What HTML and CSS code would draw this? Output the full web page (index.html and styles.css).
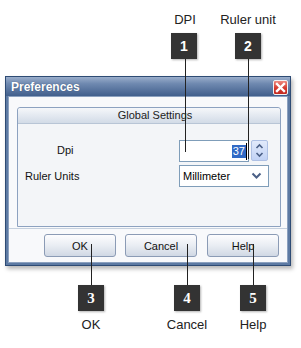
FILE: index.html
```html
<!DOCTYPE html>
<html>
<head>
<meta charset="utf-8">
<link rel="stylesheet" href="styles.css">
</head>
<body>
<div class="stage">
  <div class="dialog">
    <div class="titlebar">
      <span class="title">Preferences</span>
      <span class="close">
        <svg width="15" height="15" viewBox="0 0 15 15"><path d="M4 4 L11 11 M11 4 L4 11" stroke="#fff" stroke-width="2.4" stroke-linecap="square"/></svg>
      </span>
    </div>
    <div class="client">
      <div class="group">
        <div class="group-head">Global Settings</div>
        <div class="group-body">
          <div class="row">
            <span class="label label-dpi">Dpi</span>
            <div class="field">
              <div class="input"><span class="sel">37</span><span class="caret"></span></div>
              <div class="spin">
                <svg width="17" height="21" viewBox="0 0 17 21"><path d="M5.5 8 L8.5 5 L11.5 8" fill="none" stroke="#4a5f86" stroke-width="1.6"/><path d="M5.5 13 L8.5 16 L11.5 13" fill="none" stroke="#4a5f86" stroke-width="1.6"/></svg>
              </div>
            </div>
          </div>
          <div class="row">
            <span class="label">Ruler Units</span>
            <div class="select">
              <span>Millimeter</span>
              <svg width="11" height="8" viewBox="0 0 11 8"><path d="M1.5 1.5 L5.5 5.5 L9.5 1.5" fill="none" stroke="#4a5f86" stroke-width="2"/></svg>
            </div>
          </div>
        </div>
      </div>
      <div class="buttons">
        <div class="btn">OK</div>
        <div class="btn">Cancel</div>
        <div class="btn btn-help">Help</div>
      </div>
    </div>
  </div>

  <div class="note note-top" style="left:165px;width:40px;">DPI</div>
  <div class="note note-top" style="left:213px;width:70px;">Ruler unit</div>
  <div class="badge" style="left:171px;top:33px;">1</div>
  <div class="badge" style="left:235px;top:33px;">2</div>
  <div class="vline" style="left:185px;top:59px;height:93px;"></div>
  <div class="vline" style="left:248px;top:59px;height:100px;"></div>

  <div class="vline" style="left:91px;top:244px;height:41px;"></div>
  <div class="vline" style="left:187px;top:244px;height:41px;"></div>
  <div class="vline" style="left:253px;top:244px;height:41px;"></div>
  <div class="badge badge-serif" style="left:78px;top:285px;">3</div>
  <div class="badge badge-serif" style="left:174px;top:285px;">4</div>
  <div class="badge badge-serif" style="left:240px;top:285px;">5</div>
  <div class="note note-bottom" style="left:66px;width:50px;">OK</div>
  <div class="note note-bottom" style="left:157px;width:60px;">Cancel</div>
  <div class="note note-bottom" style="left:228px;width:50px;">Help</div>
</div>
</body>
</html>
```
FILE: styles.css
```css
html, body {
  margin: 0;
  padding: 0;
  background: #ffffff;
}
.stage {
  position: relative;
  width: 301px;
  height: 348px;
  overflow: hidden;
  font-family: "Liberation Sans", Arial, sans-serif;
}
.dialog {
  margin: 76px 0 0 5px;
  width: 284px;
  border: 1px solid #2e4b74;
  background: #5d7aa3;
  box-shadow: 2px 3px 4px rgba(0, 0, 0, 0.28);
}
.titlebar {
  height: 19px;
  display: flex;
  align-items: center;
  justify-content: space-between;
  padding: 0 2px 0 5px;
  background: linear-gradient(#9aaecb 0%, #6f89b0 35%, #415f8c 100%);
}
.title {
  color: #ffffff;
  font-weight: bold;
  font-size: 12px;
  text-shadow: 0 0 1px rgba(20, 40, 70, 0.6);
}
.close {
  width: 15px;
  height: 15px;
  box-sizing: border-box;
  border: 1px solid #f2f2f2;
  border-radius: 2px;
  background: linear-gradient(#ee8a80, #d43a2e 55%, #c42a20);
  display: flex;
  align-items: center;
  justify-content: center;
  margin-top: 1px;
}
.close svg { display: block; margin: -1px; }
.client {
  margin: 0 2px 2px 2px;
  border: 1px solid #8ca1bf;
  background: #f8f9fb;
}
.group {
  margin: 10px 6px 0 8px;
  border: 1px solid #8da2c0;
  border-radius: 3px 3px 0 0;
  background: #f3f5f8;
}
.group-head {
  height: 15px;
  line-height: 15px;
  text-align: center;
  font-size: 11px;
  color: #222;
  padding-left: 12px;
  background: linear-gradient(#f5f7fa, #d2dbe7);
  border-bottom: 1px solid #b8c5d6;
  border-radius: 3px 3px 0 0;
}
.group-body {
  height: 102px;
  box-sizing: border-box;
  padding: 16px 0 0 7px;
  display: flex;
  flex-direction: column;
  gap: 3px;
}
.row {
  display: flex;
  align-items: center;
  height: 22px;
}
.label {
  width: 154px;
  font-size: 11px;
  color: #111;
}
.label-dpi {
  box-sizing: border-box;
  padding-left: 32px;
  margin-top: -2px;
}
.field {
  display: flex;
  gap: 2px;
}
.input {
  width: 70px;
  height: 22px;
  box-sizing: border-box;
  border: 1px solid #7f9db9;
  background: #ffffff;
  display: flex;
  align-items: center;
  justify-content: flex-end;
  padding-right: 1px;
}
.sel {
  background: #316ac5;
  color: #ffffff;
  font-size: 11px;
  line-height: 13px;
  padding: 0 1px;
}
.caret {
  width: 1px;
  height: 17px;
  background: #000;
}
.spin {
  width: 17px;
  height: 21px;
  box-sizing: border-box;
  border: 1px solid #aec0e4;
  border-radius: 2px;
  background: linear-gradient(#e2eafb, #c1d2f5);
}
.spin svg { display: block; margin: -1px; }
.select {
  width: 90px;
  height: 22px;
  box-sizing: border-box;
  border: 1px solid #7f9db9;
  background: #ffffff;
  display: flex;
  align-items: center;
  justify-content: space-between;
  padding: 0 6px 0 3px;
  font-size: 11px;
  color: #000;
}
.select svg { display: block; }
.buttons {
  margin-top: 1px;
  border-top: 1px solid #c5d0de;
  display: flex;
  justify-content: flex-end;
  gap: 9px;
  padding: 5px 8px 5px 0;
}
.btn {
  width: 72px;
  height: 23px;
  box-sizing: border-box;
  border: 1px solid #8b9bb5;
  border-radius: 3px;
  background: linear-gradient(#fdfdfe, #e9edf3 50%, #d0d8e4);
  font-size: 11px;
  color: #111;
  display: flex;
  align-items: center;
  justify-content: center;
}
.btn-help { margin-left: 1px; }
.note {
  position: absolute;
  text-align: center;
  font-size: 13px;
  color: #222;
  line-height: 15px;
}
.note-top { top: 12px; }
.note-bottom { top: 317px; }
.badge {
  position: absolute;
  width: 26px;
  height: 26px;
  background: #333333;
  color: #ffffff;
  font-weight: bold;
  font-size: 14px;
  line-height: 26px;
  text-align: center;
  box-shadow: 1px 1px 2px rgba(0, 0, 0, 0.3);
}
.badge-serif {
  font-family: "Liberation Serif", "Times New Roman", serif;
  font-size: 15px;
}
.vline {
  position: absolute;
  width: 1px;
  background: #222222;
}
```
